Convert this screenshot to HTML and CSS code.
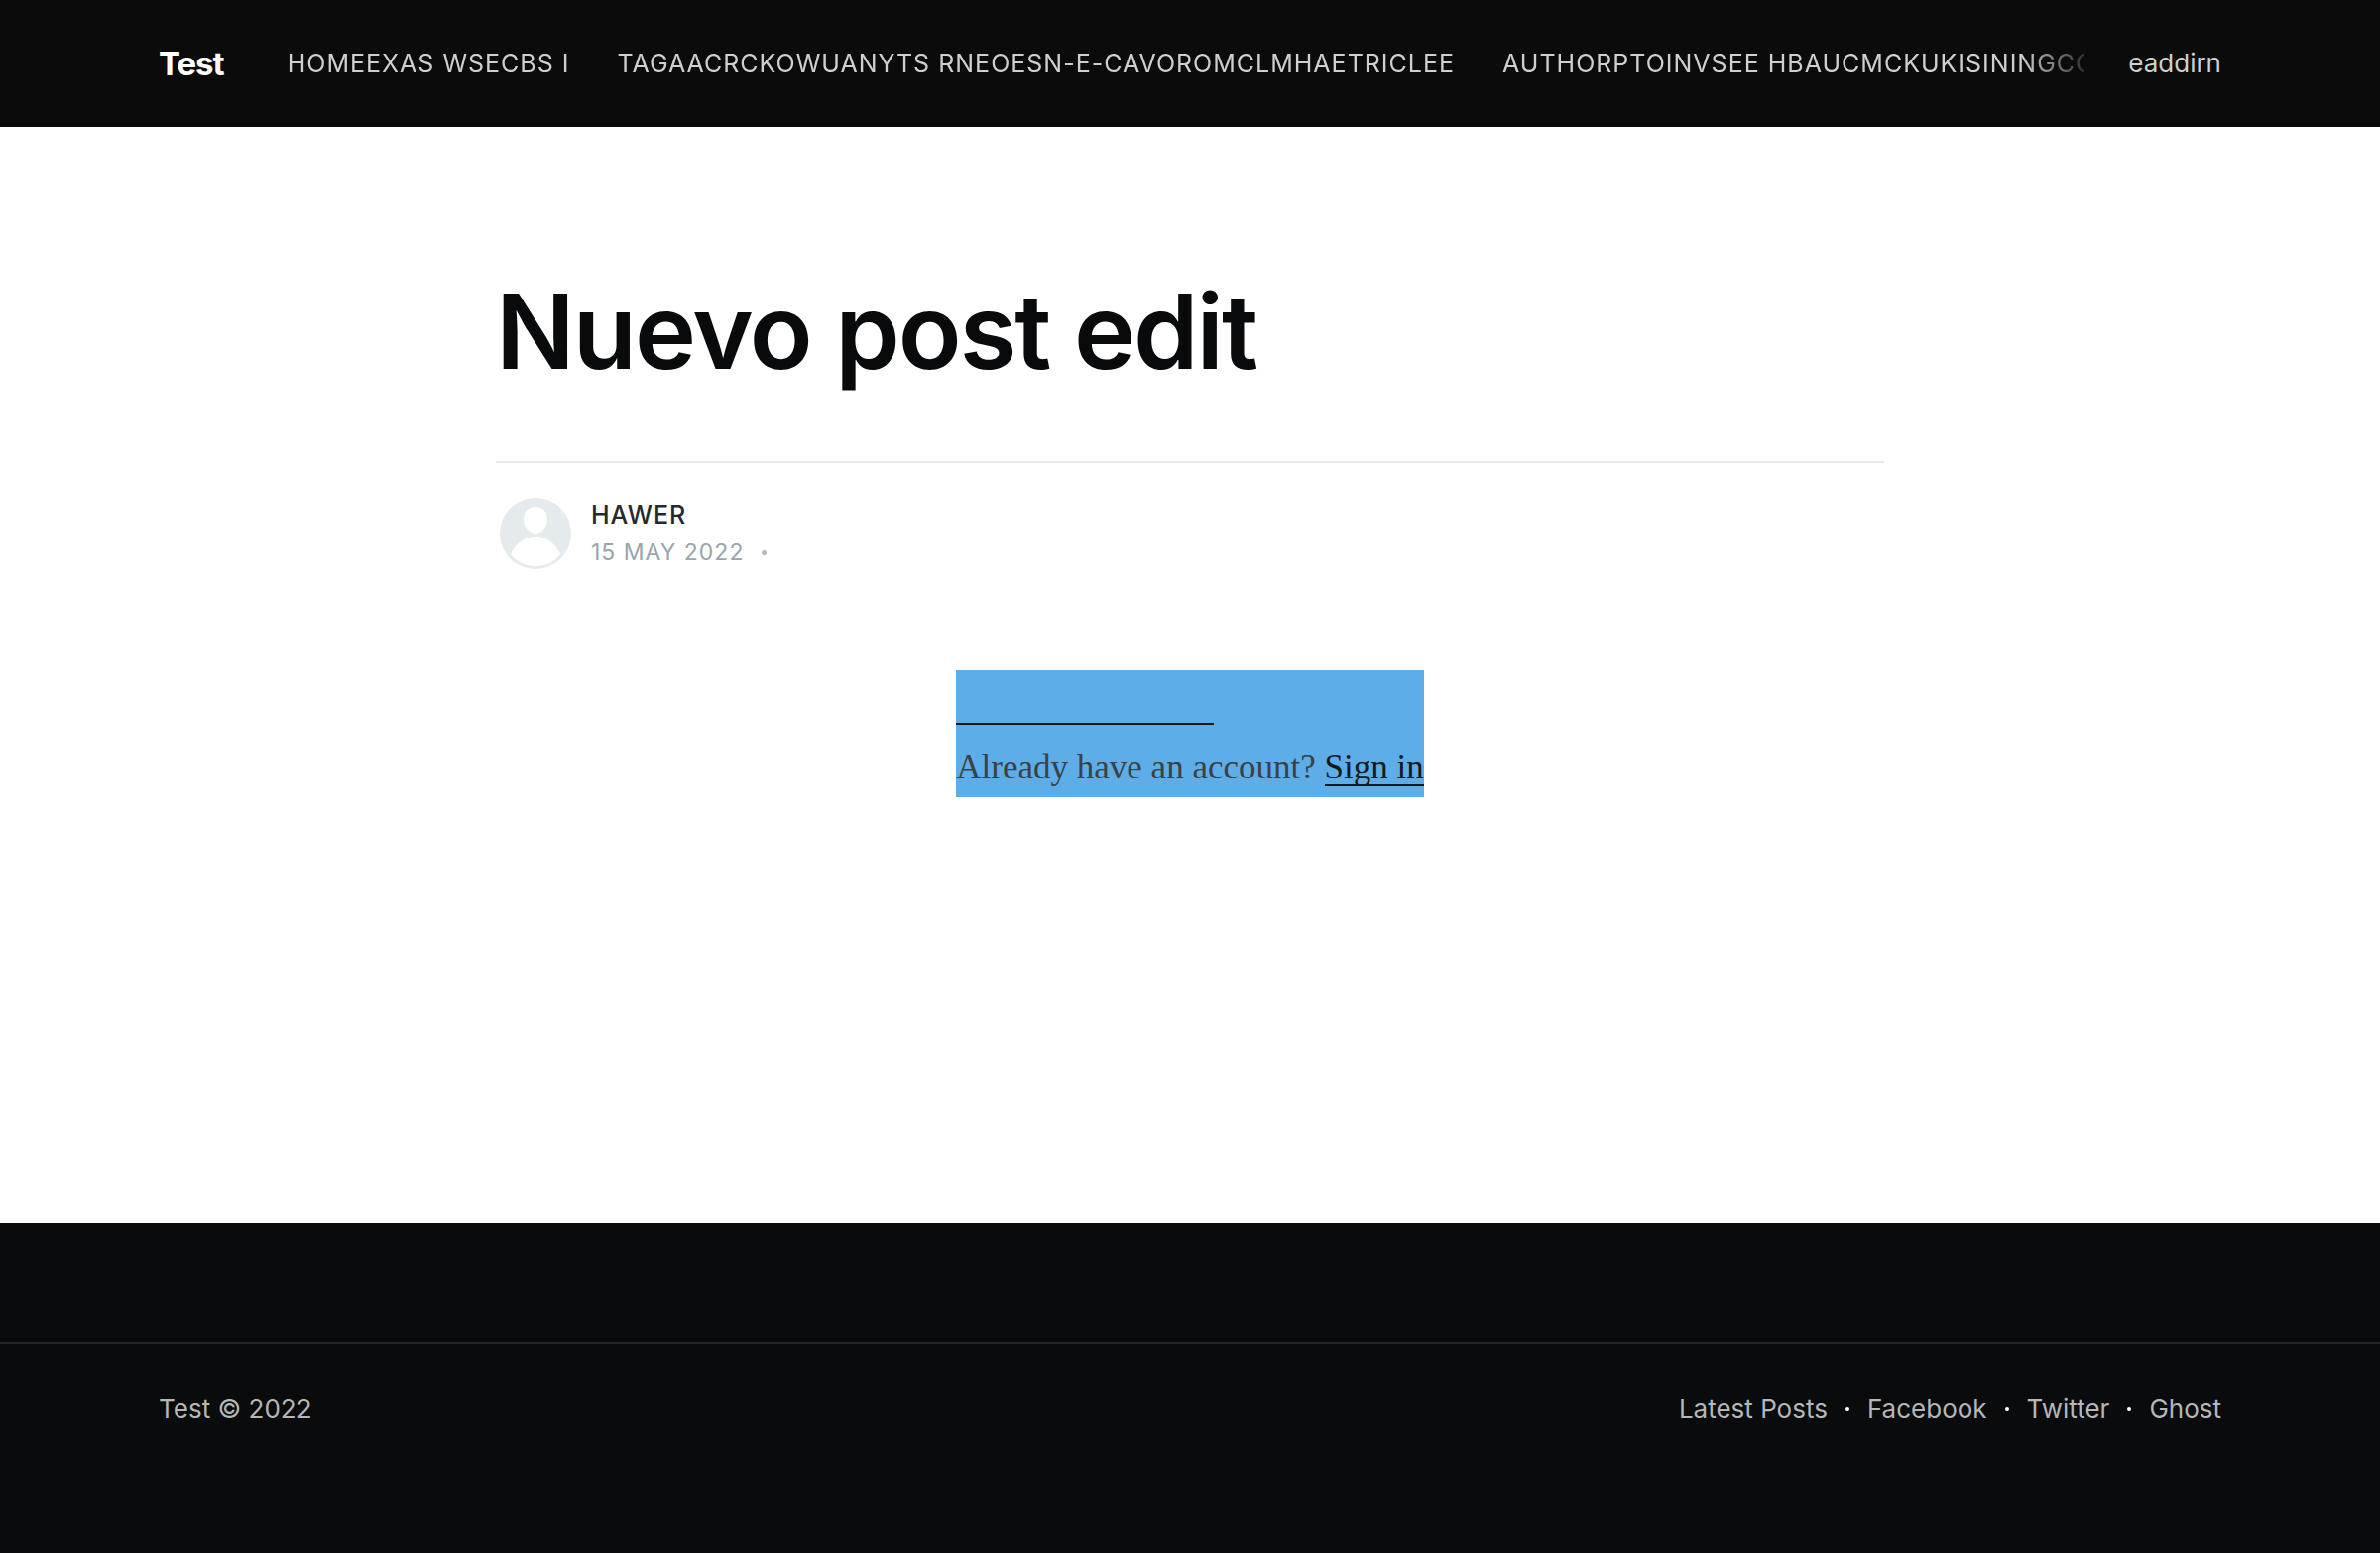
FILE: index.html
```html
<!DOCTYPE html>
<html lang="es">
<head>
<meta charset="utf-8">
<meta name="viewport" content="width=device-width, initial-scale=1">
<title>Nuevo post edit</title>
<link rel="stylesheet" href="styles.css">
</head>
<body>
<header class="site-header">
  <div class="inner header-inner">
    <a class="logo" href="#">Test</a>
    <nav class="nav" aria-label="Main">
      <a href="#">HOMEEXAS WSECBS I</a>
      <a href="#">TAGAACRCKOWUANYTS RNEOESN-E-CAVOROMCLMHAETRICLEE</a>
      <a href="#">AUTHORPTOINVSEE HBAUCMCKUKISININGCO</a>
    </nav>
    <a class="member" href="#">eaddirn</a>
  </div>
</header>
<main class="main">
  <article class="post">
    <h1 class="title">Nuevo post edit</h1>
    <div class="byline">
      <a class="avatar" href="#" aria-label="Hawer">
        <svg viewBox="0 0 72 72" aria-hidden="true">
          <circle cx="36" cy="36" r="36" fill="#e5eaed"/>
          <path d="M36 9C43 9 48 14 48 22C48 29 42 36 36 36C30 36 24 29 24 22C24 14 29 9 36 9Z" fill="#fff"/>
          <path d="M11 57C16 46 25 39 36 39C47 39 56 46 61 57C55 65 46 69 36 69C26 69 17 65 11 57Z" fill="#fff"/>
        </svg>
      </a>
      <div>
        <a class="author" href="#">HAWER</a>
        <div class="meta"><time datetime="2022-05-15">15 MAY 2022</time><span class="dot"></span></div>
      </div>
    </div>
    <aside class="cta">
      <a class="subscribe" href="#" aria-label="Subscribe"></a>
      <p class="signin">Already have an account? <a href="#">Sign in</a></p>
    </aside>
  </article>
</main>
<footer class="site-footer">
  <div class="footer-bar">
    <div class="inner footer-inner">
      <section><a href="#">Test</a> © 2022</section>
      <nav class="footer-nav" aria-label="Footer">
        <a href="#">Latest Posts</a>
        <a href="#">Facebook</a>
        <a href="#">Twitter</a>
        <a href="#">Ghost</a>
      </nav>
    </div>
  </div>
</footer>
</body>
</html>
```
FILE: styles.css
```css
*, *::before, *::after { box-sizing: border-box; }

body {
  display: flex;
  flex-direction: column;
  min-height: 100vh;
  margin: 0;
  background: #fff;
  color: #090a0b;
  font-family: Inter, "Liberation Sans", sans-serif;
  font-size: 26px;
}

a { color: inherit; text-decoration: none; }

.inner { width: 100%; max-width: 2080px; margin: 0 auto; }

.site-header { background: #0a0b0a; color: #fff; }
.header-inner { display: flex; align-items: center; height: 128px; }
.logo { margin-right: 64px; font-size: 33px; font-weight: 700; letter-spacing: -1px; }
.nav {
  display: flex;
  flex: 1;
  gap: 48px;
  min-width: 0;
  margin-right: 44px;
  overflow: hidden;
  color: #ced0ce;
  font-size: 25px;
  line-height: 42px;
  letter-spacing: 1px;
  white-space: nowrap;
  mask-image: linear-gradient(to left, rgb(0 0 0 / 20%), #000 64px);
}
.member { color: #ced0ce; font-size: 26px; line-height: 40px; }

.main { flex: 1; }
.post { width: 100%; max-width: 1400px; margin: 0 auto; padding-top: 140px; }
.title {
  margin: 0;
  padding-bottom: 65px;
  border-bottom: 2px solid #e5eaed;
  font-size: 105px;
  font-weight: 600;
  line-height: 132px;
  letter-spacing: -2px;
}
.byline { display: flex; align-items: center; gap: 20px; padding: 33px 4px 0; }
.avatar { width: 72px; height: 72px; }
.avatar svg { display: block; }
.author { display: block; color: #26292c; font-size: 25px; font-weight: 500; line-height: 38px; letter-spacing: 1px; }
.meta { display: flex; align-items: center; color: #98a5ac; font-size: 23px; line-height: 38px; letter-spacing: 1px; }
.dot { width: 5px; height: 5px; margin-left: 18px; border-radius: 50%; background: #b0babf; }

.cta {
  width: fit-content;
  margin: 100px auto 64px;
  background: #5dade9;
  color: #3a4145;
  font-family: "Liberation Serif", serif;
  font-size: 35px;
  line-height: 60px;
}
.subscribe { display: block; width: 55%; height: 55px; border-bottom: 2px solid #15171a; }
.signin { margin: 0; padding: 13px 0 0; white-space: nowrap; }
.signin a { color: #15171a; box-shadow: inset 0 -2px #15171a; }

.site-footer { padding: 120px 0; background: #0a0b0c; color: #b5b6b6; }
.footer-bar { border-top: 2px solid #232425; }
.footer-inner {
  display: flex;
  justify-content: space-between;
  padding: 43px 0 3px;
  font-size: 26px;
  line-height: 45px;
}
.footer-nav { display: flex; }
.footer-nav a { display: flex; align-items: center; }
.footer-nav a + a::before {
  content: "";
  width: 4px;
  height: 4px;
  margin: 0 18px;
  border-radius: 50%;
  background: #fff;
}
```
